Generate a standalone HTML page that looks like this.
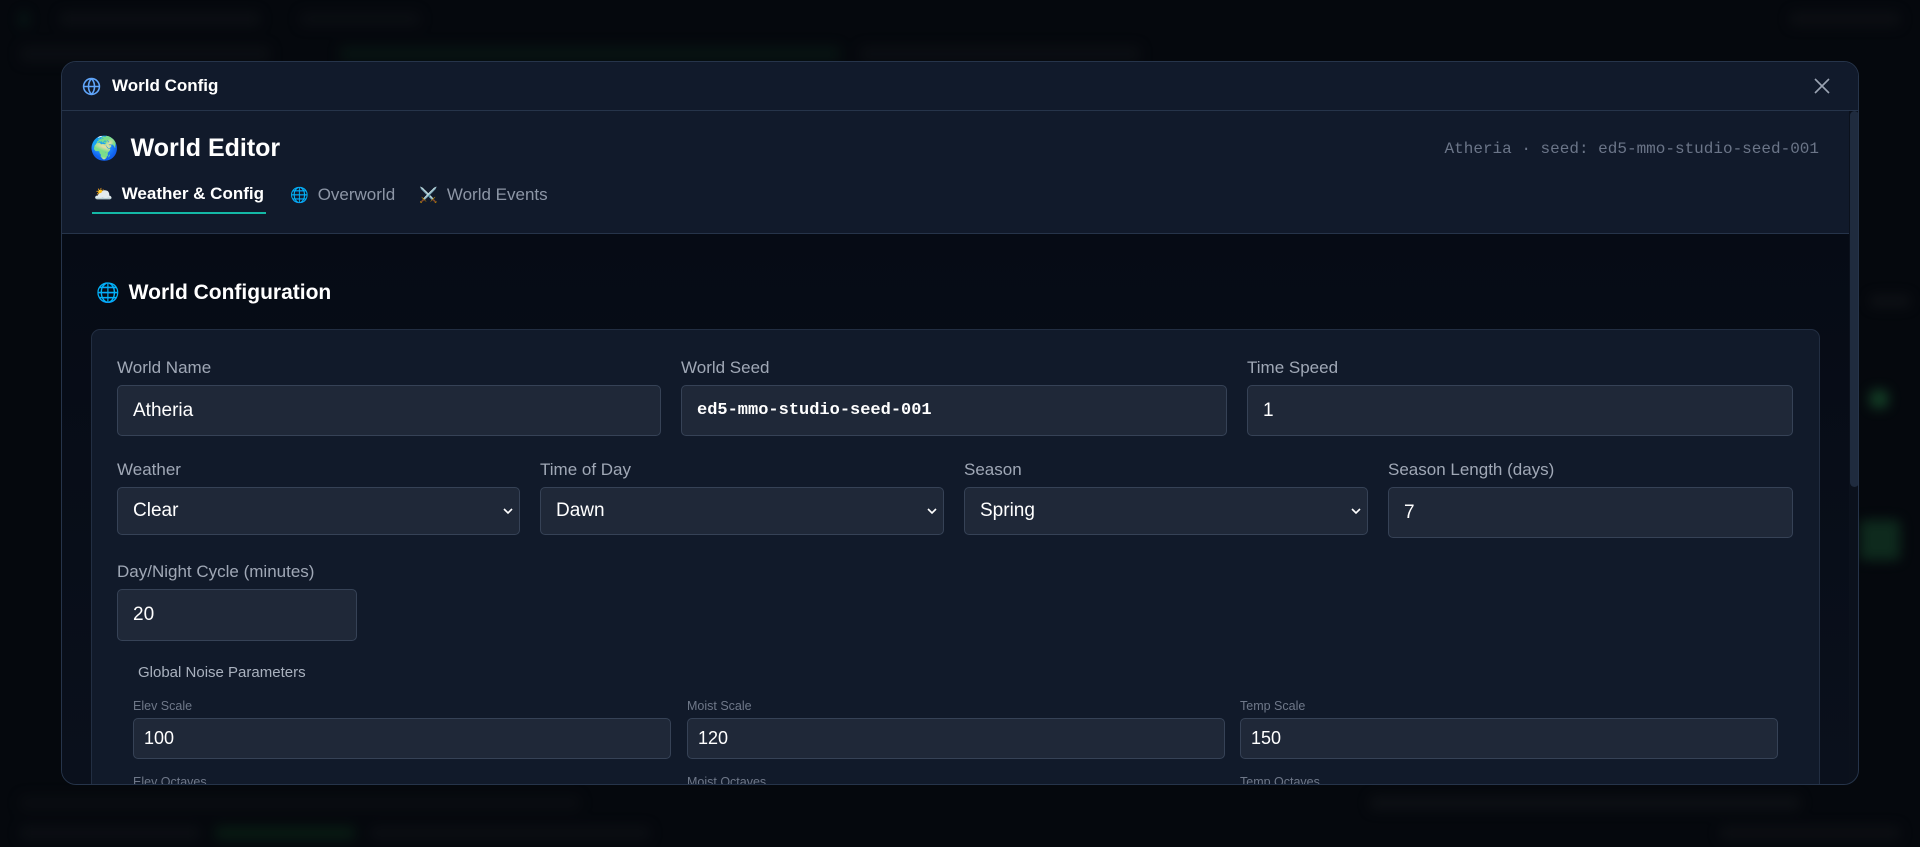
<!DOCTYPE html>
<html><head><meta charset="utf-8"><style>
*{box-sizing:border-box;margin:0;padding:0}
html,body{width:1920px;height:847px;overflow:hidden;background:#05080d;font-family:"Liberation Sans",sans-serif}
.bg{position:absolute;inset:0;filter:blur(6px);opacity:.55}
.bg div{position:absolute;border-radius:3px}
.modal{position:absolute;left:61px;top:61px;width:1798px;height:724px;border:1px solid #26344a;border-radius:15px;overflow:hidden;background:#0b111c}
.top{height:49px;background:#111a2b;border-bottom:1px solid #26344a;display:flex;align-items:center;padding-left:20px;color:#fff;font-weight:bold;font-size:17px}
.top svg{margin-right:11px}
.close{position:absolute;right:27px;top:15px}
.hdr{position:absolute;left:0;top:49px;width:1787px;height:123px;background:#111a2b;border-bottom:1px solid #26344a}
.title{position:absolute;left:28px;top:23px;font-size:25px;font-weight:bold;color:#fff;display:flex;align-items:center}
.title span.e{font-size:23px;margin-right:12px}
.seed{position:absolute;right:30px;top:29px;font-family:"Liberation Mono",monospace;font-size:16px;color:#6b7588}
.tabs{position:absolute;left:30px;top:73px;display:flex;font-size:17px}
.tab{padding:0 0 8px 0;margin-right:24px;color:#8d96a6;display:flex;align-items:center}
.tab i{font-style:normal;font-size:15px;margin-right:9px}
.tab.on{color:#fff;font-weight:bold;border-bottom:2px solid #14b8a6;padding-left:2px;padding-right:2px}
.body{position:absolute;left:0;top:172px;width:1787px;height:560px;background:linear-gradient(180deg,#060b15,#0a101c)}
.scroll{position:absolute;left:1788px;top:49px;width:9px;height:376px;background:#1f2b3e;border-radius:5px}
h2{position:absolute;left:34px;top:47px;color:#fff;font-size:21px;font-weight:bold;display:flex;align-items:center}
h2 i{font-style:normal;font-size:19px;margin-right:9px}
.card{position:absolute;left:29px;top:95px;width:1729px;height:500px;background:#111a2a;border:1px solid #222e42;border-radius:9px}
.f{position:absolute}
.f label{display:block;color:#a0a8b6;font-size:17px;margin-bottom:7px}
.in{background:#1f2838;border:1px solid #364256;border-radius:5px;color:#fff;font-size:19px;display:flex;align-items:center;padding-left:15px;position:relative}
.in .ch{position:absolute;right:6px;top:50%;margin-top:-4px}
.mono{font-family:"Liberation Mono",monospace;font-weight:bold;font-size:17px}
.sm label{font-size:12.5px;color:#6f7889;margin-bottom:5px}
.sm .in{font-size:18px;padding-left:10px}
</style></head><body>
<div class="bg">
 <div style="left:20px;top:12px;width:8px;height:14px;background:#0b2a20"></div>
 <div style="left:60px;top:12px;width:200px;height:14px;background:#111419"></div>
 <div style="left:300px;top:12px;width:120px;height:14px;background:#0f1217"></div>
 <div style="left:1790px;top:12px;width:110px;height:14px;background:#121418"></div>
 <div style="left:20px;top:46px;width:250px;height:16px;background:#101318"></div>
 <div style="left:340px;top:46px;width:500px;height:16px;background:#0a1d17"></div>
 <div style="left:860px;top:46px;width:280px;height:16px;background:#101318"></div>
 <div style="left:1870px;top:390px;width:18px;height:18px;background:#1f6a3a;border-radius:4px"></div>
 <div style="left:1860px;top:520px;width:40px;height:40px;background:#16472b"></div>
 <div style="left:1870px;top:295px;width:40px;height:12px;background:#15181c"></div>
 <div style="left:20px;top:796px;width:560px;height:14px;background:#0e1115"></div>
 <div style="left:1370px;top:796px;width:430px;height:14px;background:#14171b"></div>
 <div style="left:20px;top:826px;width:180px;height:14px;background:#111419"></div>
 <div style="left:215px;top:826px;width:140px;height:14px;background:#0c2a18"></div>
 <div style="left:370px;top:826px;width:280px;height:14px;background:#101318"></div>
 <div style="left:1720px;top:826px;width:180px;height:14px;background:#121418"></div>
</div>
<div class="modal">
 <div class="top"><svg width="19" height="19" viewBox="0 0 24 24" fill="none" stroke="#60a5fa" stroke-width="2"><circle cx="12" cy="12" r="10"/><path d="M2 12h20M12 2a15 15 0 0 1 0 20M12 2a15 15 0 0 0 0 20"/></svg>World Config</div>
 <svg class="close" width="18" height="18" viewBox="0 0 18 18" stroke="#9aa3b2" stroke-width="1.6"><path d="M2 2L16 16M16 2L2 16"/></svg>
 <div class="hdr">
  <div class="title"><span class="e">🌍</span>World Editor</div>
  <div class="seed">Atheria · seed: ed5-mmo-studio-seed-001</div>
  <div class="tabs">
   <div class="tab on"><i>🌥️</i>Weather &amp; Config</div>
   <div class="tab"><i>🌐</i>Overworld</div>
   <div class="tab"><i>⚔️</i>World Events</div>
  </div>
 </div>
 <div class="scroll"></div>
 <div class="body">
  <h2><i>🌐</i>World Configuration</h2>
  <div class="card">
   <div class="f" style="left:25px;top:28px"><label>World Name</label><div class="in" style="width:544px;height:51px">Atheria</div></div>
   <div class="f" style="left:589px;top:28px"><label>World Seed</label><div class="in mono" style="width:546px;height:51px">ed5-mmo-studio-seed-001</div></div>
   <div class="f" style="left:1155px;top:28px"><label>Time Speed</label><div class="in" style="width:546px;height:51px">1</div></div>

   <div class="f" style="left:25px;top:130px"><label>Weather</label><div class="in" style="width:403px;height:48px">Clear<svg class="ch" width="10" height="8" viewBox="0 0 10 8" fill="none" stroke="#fff" stroke-width="1.6"><path d="M1 2l4 4 4-4"/></svg></div></div>
   <div class="f" style="left:448px;top:130px"><label>Time of Day</label><div class="in" style="width:404px;height:48px">Dawn<svg class="ch" width="10" height="8" viewBox="0 0 10 8" fill="none" stroke="#fff" stroke-width="1.6"><path d="M1 2l4 4 4-4"/></svg></div></div>
   <div class="f" style="left:872px;top:130px"><label>Season</label><div class="in" style="width:404px;height:48px">Spring<svg class="ch" width="10" height="8" viewBox="0 0 10 8" fill="none" stroke="#fff" stroke-width="1.6"><path d="M1 2l4 4 4-4"/></svg></div></div>
   <div class="f" style="left:1296px;top:130px"><label>Season Length (days)</label><div class="in" style="width:405px;height:51px">7</div></div>

   <div class="f" style="left:25px;top:232px"><label>Day/Night Cycle (minutes)</label><div class="in" style="width:240px;height:52px">20</div></div>

   <div style="position:absolute;left:46px;top:334px;color:#a9b1be;font-size:15px">Global Noise Parameters</div>

   <div class="f sm" style="left:41px;top:369px"><label>Elev Scale</label><div class="in" style="width:538px;height:41px">100</div></div>
   <div class="f sm" style="left:595px;top:369px"><label>Moist Scale</label><div class="in" style="width:538px;height:41px">120</div></div>
   <div class="f sm" style="left:1148px;top:369px"><label>Temp Scale</label><div class="in" style="width:538px;height:41px">150</div></div>

   <div class="f sm" style="left:41px;top:445px"><label>Elev Octaves</label></div>
   <div class="f sm" style="left:595px;top:445px"><label>Moist Octaves</label></div>
   <div class="f sm" style="left:1148px;top:445px"><label>Temp Octaves</label></div>
  </div>
 </div>
</div>
</body></html>
